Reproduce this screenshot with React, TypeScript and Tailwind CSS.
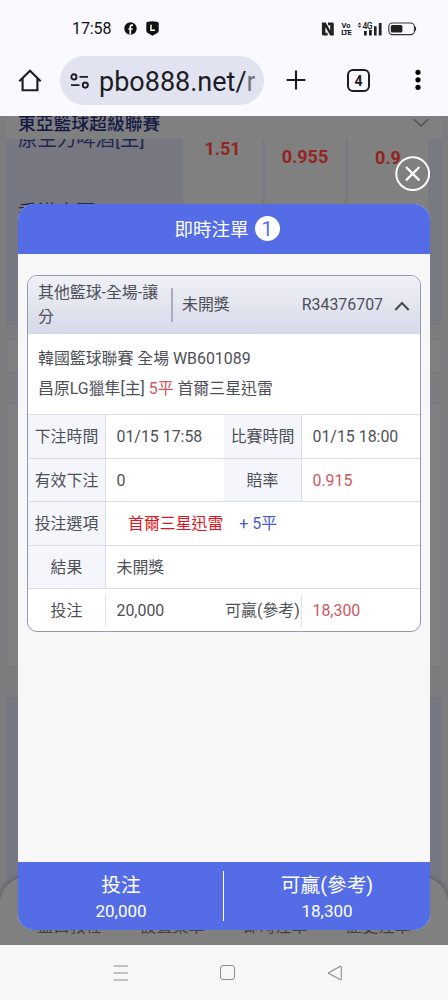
import type { ReactNode } from "react";
import clsx from "clsx";

const NAV_ITEMS = ["盤口教程", "設置菜單", "即時注單", "歷史注單"];

function StatusBar() {
  return (
    <div className="flex h-[50px] shrink-0 items-center pt-[7px] pl-[72px] text-[#111]">
      <span className="w-[52px] text-[16px] leading-[20px] tracking-[-0.1px]">17:58</span>
      <svg width="13" height="13" viewBox="0 0 13 13">
        <circle cx="6.5" cy="6.5" r="6.2" fill="#111" />
        <path d="M9 3.2H8.1C6.8 3.2 6.3 4 6.3 5V12.6M4.4 7H8.7" fill="none" stroke="#fff" strokeWidth="1.7" />
      </svg>
      <svg className="ml-[9px]" width="13" height="15" viewBox="0 0 13 15">
        <path d="M2 .8Q6.5-.4 11 .8Q12.7 1 12.7 2.6V9.5Q12.7 11 11.3 12L6.5 14.8L1.7 12Q.3 11 .3 9.5V2.6Q.3 1 2 .8Z" fill="#111" />
        <path d="M5 3.8V9.3H9" fill="none" stroke="#fff" strokeWidth="1.5" />
      </svg>
      <svg className="ml-[162px]" width="14" height="14" viewBox="0 0 14 14">
        <path d="M.9 .6H4.8L9.2 8.4V3.2H7V.6H11.4Q12.8 .6 12.8 2V13.4H9.2L4.4 5V10.8H6.6V13.4H2.3Q.9 13.4 .9 12Z" fill="#222" />
      </svg>
      <span className="ml-[6px] flex w-[10px] flex-col items-center text-[7.5px] leading-[7px] font-bold">
        <span>Vo</span>
        <span className="tracking-[-0.8px]">LTE</span>
      </span>
      <svg className="ml-[6px]" width="26" height="14" viewBox="0 0 26 14">
        <path d="M.6 2.4L2.5 .4L4.4 2.4ZM.6 3.8L2.5 5.8L4.4 3.8Z" fill="#222" />
        <text x="5.5" y="6.8" fontSize="8.5" fontWeight="500" fill="#222" textLength="10">4G</text>
        <path d="M7 9H9.8V13.5H7ZM12 7.8H14.8V13.5H12ZM17 4.2H19.6V13.5H17ZM21.8 1H24.6V13.5H21.8Z" fill="#222" />
      </svg>
      <svg className="ml-[5px]" width="29" height="14" viewBox="0 0 29 14">
        <rect x=".8" y="1" width="25.6" height="11.6" rx="3.6" fill="none" stroke="#333" strokeWidth="1.1" />
        <rect x="2.8" y="3" width="11.6" height="7.6" rx="1.6" fill="#222" />
        <path d="M27.4 4.8V8.8" stroke="#333" strokeWidth="1.3" />
      </svg>
    </div>
  );
}

function BrowserBar() {
  return (
    <div className="flex h-[66px] shrink-0 items-start pt-[6px] text-[#1c1c22]">
      <svg className="mt-[13px] ml-[18px]" width="24" height="24" viewBox="0 0 24 24">
        <path d="M1.3 12.2L12 1.7L22.7 12.2M4.6 9.5V21.2H19.4V9.5" fill="none" stroke="#1c1c22" strokeWidth="2.1" />
      </svg>
      <div className="ml-[18px] flex h-[49px] w-[204px] items-center overflow-hidden rounded-full bg-[#e1e4f0] pl-[10px]">
        <svg width="20" height="16" viewBox="0 0 20 16">
          <g fill="none" stroke="#1c1c22" strokeWidth="1.9">
            <circle cx="3.9" cy="3.9" r="2.6" />
            <path d="M9.5 3.9H18M1 12.1H9.5" />
            <circle cx="15.3" cy="12.1" r="2.6" />
          </g>
        </svg>
        <span className="mt-[3px] ml-[9px] w-[156px] overflow-hidden text-[27px] leading-[40px] whitespace-nowrap">
          pbo888.net/<span className="text-[#75767d]">r</span>
        </span>
      </div>
      <svg className="mt-[14px] ml-[22px]" width="20" height="20" viewBox="0 0 20 20">
        <path d="M10 .6V19.4M.6 10H19.4" stroke="#1c1c22" strokeWidth="2.1" />
      </svg>
      <div className="mt-[13px] ml-[41px] flex h-[23px] w-[23px] items-center justify-center rounded-[6px] border-[2.2px] border-[#1c1c22] text-[14px] leading-none font-bold">
        4
      </div>
      <svg className="mt-[13px] ml-[45px]" width="6" height="22" viewBox="0 0 6 22">
        <circle cx="3" cy="3.3" r="2.6" />
        <circle cx="3" cy="10.8" r="2.6" />
        <circle cx="3" cy="18.3" r="2.6" />
      </svg>
    </div>
  );
}

function LeaguePage() {
  return (
    <div className="flex h-full flex-col overflow-hidden bg-[#7d7d7f] px-[6px] font-medium">
      <div className="flex h-[23px] shrink-0 items-start justify-between overflow-hidden bg-[#808080] pr-[13px] pl-[12px]">
        <span className="-mt-[5px] text-[17.8px] leading-[26px] text-[#151a45]">東亞籃球超級聯賽</span>
        <svg className="mt-[2px]" width="16" height="10" viewBox="0 0 16 10">
          <path d="M1 1.2L8 8L15 1.2" fill="none" stroke="#50505a" strokeWidth="1.4" />
        </svg>
      </div>
      <div className="flex h-[186px] shrink-0 bg-[#797982] text-[18px] leading-[20px] font-bold text-[#92251f]">
        <div className="h-full w-[177px] overflow-hidden bg-[#787882] pl-[12px] text-[19.4px] leading-[24px] font-normal text-[#22284c]">
          <div className="-mt-[11px] h-[73px]">原生力啤酒[主]</div>
          <div>香港東區</div>
        </div>
        <div className="w-[79px] bg-[#808080] text-center">1.51</div>
        <div className="ml-[3px] w-[80px] bg-[#808080] pt-[8px] text-center">0.955</div>
        <div className="ml-[3px] w-[80px] bg-[#808080] pt-[9px] text-center">0.9</div>
      </div>
      <div className="mt-[14px] h-[34px] shrink-0 rounded-[3px] border border-[#777779] bg-[#808080]" />
      <div className="mt-[30px] h-[264px] shrink-0 rounded-[3px] border border-[#777779] bg-[#808080]" />
      <div className="mt-[30px] h-[250px] shrink-0 border-t border-[#777779] bg-[#787882]" />
    </div>
  );
}

function BottomNav() {
  return (
    <div className="absolute inset-x-0 bottom-0 flex h-[68px] items-end justify-around rounded-t-[26px] bg-[#808080] px-[18px] pb-[6px] text-[16px] leading-[24px] text-[#404045] shadow-[0_-1px_5px_#55555c]">
      {NAV_ITEMS.map((item) => (
        <span key={item}>{item}</span>
      ))}
    </div>
  );
}

function Label({ children, plain }: { children: ReactNode; plain?: boolean }) {
  return (
    <div
      className={clsx(
        "flex w-[78px] shrink-0 items-center justify-center pt-[2px] whitespace-nowrap",
        plain ? "my-[5px] border-r border-[#e2e3ee]" : "border-r border-[#dcddea] bg-[#f5f6fc]",
      )}
    >
      {children}
    </div>
  );
}

function Value({ children, red }: { children: ReactNode; red?: boolean }) {
  return (
    <div className={clsx("flex w-[118px] items-center pt-[2px] pl-[10.5px] whitespace-nowrap", red && "text-[#cc5763]")}>
      {children}
    </div>
  );
}

function Row({ children }: { children: ReactNode }) {
  return <div className="flex h-[43.5px] border-t border-[#dcddea]">{children}</div>;
}

function BetCard() {
  return (
    <div className="mx-[9px] mt-[21px] h-[357px] overflow-hidden rounded-[10px] border border-[#9596b8] bg-white text-[15.9px] text-[#4e5057]">
      <div className="flex h-[58px] items-center bg-linear-to-b from-[#f0f1f7] to-[#d6d9e8] pl-[10px]">
        <div className="w-[133px] pr-[6px] leading-[24px]">其他籃球-全場-讓分</div>
        <div className="h-[34px] w-[2px] bg-[#aaadbd]" />
        <div className="ml-[9px]">未開獎</div>
        <div className="ml-auto">R34376707</div>
        <svg className="mt-[2px] mr-[10px] ml-[11px]" width="16" height="12" viewBox="0 0 16 12">
          <path d="M1.3 10L8 3L14.7 10" fill="none" stroke="#484b55" strokeWidth="2" />
        </svg>
      </div>
      <div className="h-[80px] pt-[10px] pl-[10px] leading-[30px]">
        <div>韓國籃球聯賽 全場 WB601089</div>
        <div>
          昌原LG獵隼[主] <span className="text-[#cc5763]">5平</span> 首爾三星迅雷
        </div>
      </div>
      <Row>
        <Label>下注時間</Label>
        <Value>01/15 17:58</Value>
        <Label>比賽時間</Label>
        <Value>01/15 18:00</Value>
      </Row>
      <Row>
        <Label>有效下注</Label>
        <Value>0</Value>
        <Label>賠率</Label>
        <Value red>0.915</Value>
      </Row>
      <Row>
        <Label>投注選項</Label>
        <div className="flex items-center pt-[2px] pl-[22px]">
          <span className="text-[#dc1620]">首爾三星迅雷</span>
          <span className="ml-[16px] text-[#4a5bc8]">+ 5平</span>
        </div>
      </Row>
      <Row>
        <Label>結果</Label>
        <Value>未開獎</Value>
      </Row>
      <Row>
        <Label plain>投注</Label>
        <Value>20,000</Value>
        <Label plain>可贏(參考)</Label>
        <Value red>18,300</Value>
      </Row>
    </div>
  );
}

function Total({ label, amount }: { label: string; amount: string }) {
  return (
    <div className="flex flex-1 flex-col items-center pt-[9px]">
      <span className="text-[19.7px] leading-[29px]">{label}</span>
      <span className="text-[17px] leading-[22px]">{amount}</span>
    </div>
  );
}

function BetSlipModal() {
  return (
    <div className="absolute top-[88px] left-[18px] flex h-[726px] w-[412px] flex-col overflow-hidden rounded-[16px] bg-[#f7f7f7]">
      <div className="flex h-[50px] shrink-0 items-center justify-center gap-[6px] bg-[#546de7] pl-[6px] text-[18.5px] text-white">
        <span className="mt-[3px]">即時注單</span>
        <span className="mb-[1px] flex h-[25px] w-[25px] items-center justify-center rounded-full bg-white pt-[1px] text-[20px] leading-none text-[#546de7]">
          1
        </span>
      </div>
      <BetCard />
      <div className="mt-auto flex h-[68px] shrink-0 bg-[#546de7] text-white">
        <Total label="投注" amount="20,000" />
        <div className="mt-[9px] -ml-px h-[50px] w-px bg-white" />
        <Total label="可贏(參考)" amount="18,300" />
      </div>
    </div>
  );
}

export default function App() {
  return (
    <div className="flex h-[1000px] w-[448px] flex-col overflow-hidden bg-[#faf9ff] font-['Roboto','Noto_Sans_CJK_TC',sans-serif]">
      <StatusBar />
      <BrowserBar />
      <div className="relative h-[829px] shrink-0 overflow-hidden">
        <LeaguePage />
        <BottomNav />
        <BetSlipModal />
        <svg className="absolute top-[40px] left-[395px]" width="36" height="36" viewBox="0 0 36 36">
          <circle cx="17.7" cy="17.7" r="16.4" fill="none" stroke="#fff" strokeWidth="2" />
          <path d="M11 11L24.4 24.4M24.4 11L11 24.4" stroke="#fff" strokeWidth="2.2" />
        </svg>
      </div>
      <div className="flex h-[55px] shrink-0 items-center bg-[#f7f7f7] pl-[113px]">
        <svg width="16" height="16" viewBox="0 0 16 16">
          <path d="M.5 1H15M.5 8H15M.5 15H15" stroke="#8c8c8c" strokeWidth="1" />
        </svg>
        <div className="ml-[91px] h-[15px] w-[15px] rounded-[3px] border border-[#8c8c8c]" />
        <svg className="ml-[92px]" width="16" height="16" viewBox="0 0 16 16">
          <path d="M1.2 8L13 1.4Q14.3 .9 14.3 2.2V13.8Q14.3 15.1 13 14.6Z" fill="none" stroke="#8c8c8c" strokeWidth="1.1" strokeLinejoin="round" />
        </svg>
      </div>
    </div>
  );
}
